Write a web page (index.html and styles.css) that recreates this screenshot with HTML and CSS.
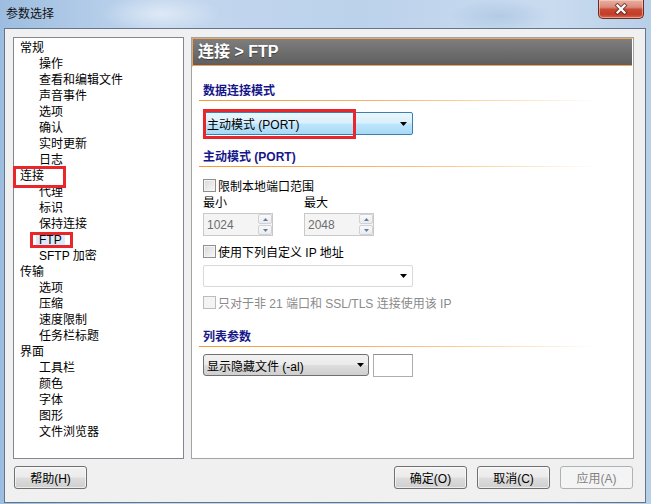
FILE: index.html
```html
<!DOCTYPE html>
<html>
<head>
<meta charset="utf-8">
<title>参数选择</title>
<link rel="stylesheet" href="styles.css">
</head>
<body>
<div class="window">
  <div class="titlebar">
    <span class="title">参数选择</span>
    <div class="close">
      <svg width="14" height="12" viewBox="0 0 14 12">
        <path d="M3.5 2.5 L10.5 9.5 M10.5 2.5 L3.5 9.5" stroke="#4a2a2a" stroke-width="4.2" stroke-linecap="square" fill="none" opacity="0.7"/>
        <path d="M3.5 2.5 L10.5 9.5 M10.5 2.5 L3.5 9.5" stroke="#ffffff" stroke-width="2.2" stroke-linecap="square" fill="none"/>
      </svg>
    </div>
  </div>
  <div class="client">
    <div class="panels">
      <div class="tree">
        <div class="node">常规</div>
        <div class="node child">操作</div>
        <div class="node child">查看和编辑文件</div>
        <div class="node child">声音事件</div>
        <div class="node child">选项</div>
        <div class="node child">确认</div>
        <div class="node child">实时更新</div>
        <div class="node child">日志</div>
        <div class="node">连接<span class="mark mark-conn"></span></div>
        <div class="node child">代理</div>
        <div class="node child">标识</div>
        <div class="node child">保持连接</div>
        <div class="node child"><span class="sel">FTP</span><span class="mark mark-ftp"></span></div>
        <div class="node child">SFTP 加密</div>
        <div class="node">传输</div>
        <div class="node child">选项</div>
        <div class="node child">压缩</div>
        <div class="node child">速度限制</div>
        <div class="node child">任务栏标题</div>
        <div class="node">界面</div>
        <div class="node child">工具栏</div>
        <div class="node child">颜色</div>
        <div class="node child">字体</div>
        <div class="node child">图形</div>
        <div class="node child">文件浏览器</div>
      </div>
      <div class="page">
        <div class="page-header">连接 &gt; FTP</div>
        <div class="page-body">
          <div class="section s1">数据连接模式</div>
          <div class="combo combo-hot">
            <span class="combo-text">主动模式 (PORT)</span>
            <svg class="arrow" width="7" height="4" viewBox="0 0 7 4"><path d="M0 0H7L3.5 4Z" fill="#000"/></svg>
            <span class="mark mark-combo"></span>
          </div>
          <div class="section s2">主动模式 (PORT)</div>
          <div class="check-row r1"><span class="cb"></span>限制本地端口范围</div>
          <div class="grid2 labels"><span>最小</span><span>最大</span></div>
          <div class="grid2 spins">
            <div class="spin">
              <span class="spin-text">1024</span>
              <span class="spin-btns">
                <span class="sb"><svg width="5" height="3" viewBox="0 0 5 3"><path d="M0 3H5L2.5 0Z" fill="#5f7ea3"/></svg></span>
                <span class="sb"><svg width="5" height="3" viewBox="0 0 5 3"><path d="M0 0H5L2.5 3Z" fill="#5f7ea3"/></svg></span>
              </span>
            </div>
            <div class="spin">
              <span class="spin-text">2048</span>
              <span class="spin-btns">
                <span class="sb"><svg width="5" height="3" viewBox="0 0 5 3"><path d="M0 3H5L2.5 0Z" fill="#5f7ea3"/></svg></span>
                <span class="sb"><svg width="5" height="3" viewBox="0 0 5 3"><path d="M0 0H5L2.5 3Z" fill="#5f7ea3"/></svg></span>
              </span>
            </div>
          </div>
          <div class="check-row r2"><span class="cb"></span>使用下列自定义 IP 地址</div>
          <div class="combo combo-empty">
            <span class="combo-text"></span>
            <svg class="arrow" width="7" height="4" viewBox="0 0 7 4"><path d="M0 0H7L3.5 4Z" fill="#000"/></svg>
          </div>
          <div class="check-row r3 disabled"><span class="cb"></span>只对于非 21 端口和 SSL/TLS 连接使用该 IP</div>
          <div class="section s3">列表参数</div>
          <div class="list-row">
            <div class="combo combo-btn">
              <span class="combo-text">显示隐藏文件 (-al)</span>
              <svg class="arrow" width="7" height="4" viewBox="0 0 7 4"><path d="M0 0H7L3.5 4Z" fill="#000"/></svg>
            </div>
            <div class="textbox"></div>
          </div>
        </div>
      </div>
    </div>
    <div class="buttons">
      <div class="btn">帮助(H)</div>
      <div class="spacer"></div>
      <div class="btn">确定(O)</div>
      <div class="btn">取消(C)</div>
      <div class="btn btn-disabled">应用(A)</div>
    </div>
  </div>
</div>
</body>
</html>
```
FILE: styles.css
```css
* { box-sizing: border-box; }
html, body { margin: 0; padding: 0; }
body {
  width: 651px;
  height: 504px;
  overflow: hidden;
  font-family: "Liberation Sans", "Noto Sans CJK SC", sans-serif;
  font-size: 12px;
  color: #000;
}
.window {
  width: 651px;
  height: 504px;
  display: flex;
  flex-direction: column;
  background:
    radial-gradient(ellipse 60px 18px at 160px 14px, rgba(255,255,255,0.45), rgba(255,255,255,0)),
    radial-gradient(ellipse 50px 16px at 500px 16px, rgba(160,190,220,0.5), rgba(160,190,220,0)),
    linear-gradient(90deg, #9dbde0 0%, #c3d7ee 25%, #bcd2eb 55%, #c9dbef 85%, #b8cfe8 100%);
}
.titlebar {
  height: 28px;
  display: flex;
  justify-content: space-between;
  align-items: flex-start;
  padding-left: 6px;
}
.title {
  line-height: 28px;
  font-size: 12px;
  color: #111;
}
.close {
  width: 46px;
  height: 19px;
  margin-right: 7px;
  border: 1px solid #6b2c24;
  border-top: none;
  border-radius: 0 0 5px 5px;
  background: linear-gradient(#e9b0a2 0%, #dc8a7a 40%, #c84a35 52%, #c33c27 80%, #d66a52 100%);
  box-shadow: inset 0 0 0 1px rgba(255,220,210,0.5);
  display: flex;
  align-items: center;
  justify-content: center;
}
.client {
  margin-left: 4px;
  width: 642px;
  height: 475px;
  border: 1px solid #64748a;
  background: #f0f0f0;
  padding: 8px 11px 0 8px;
}
.panels {
  display: flex;
  gap: 7px;
}
.tree {
  width: 171px;
  height: 422px;
  border: 1px solid #828790;
  background: #fff;
  padding-top: 2px;
}
.node {
  position: relative;
  height: 16px;
  line-height: 16px;
  padding-left: 6px;
  white-space: nowrap;
}
.node.child { padding-left: 25px; }
.sel {
  display: inline-block;
  height: 14px;
  line-height: 14px;
  margin-left: -3px;
  padding: 0 3px;
  background: #dbeafa;
}
.mark {
  position: absolute;
  border: 3px solid #e8262b;
  z-index: 2;
}
.mark-conn { left: -1px; top: -2px; width: 53px; height: 22px; }
.mark-ftp { left: 16px; top: 0; width: 43px; height: 16px; }
.mark-combo { left: -1px; top: -4px; width: 153px; height: 30px; }

.page {
  width: 443px;
  height: 422px;
  border: 1px solid #a3a3a3;
  background: #fff;
}
.page-header {
  height: 29px;
  border-top: 1px solid #f2a558;
  border-left: 1px solid #f2a558;
  border-right: 1px solid #fff;
  border-bottom: 1px solid #fff;
  box-shadow: inset 0 -1px 0 #f2a558;
  background: linear-gradient(#7e7e7e, #5d5d5d);
  color: #fff;
  font-weight: bold;
  font-size: 16px;
  line-height: 26px;
  padding-left: 5px;
  text-shadow: 0 1px 1px rgba(0,0,0,0.4);
}
.page-body {
  padding-left: 11px;
}
.section {
  height: 18px;
  line-height: 16px;
  margin-left: -4px;
  padding-left: 4px;
  font-weight: bold;
  color: #17178a;
  background: linear-gradient(90deg, #f49a34 0%, #f7b26a 40%, #fcd9b0 68%, rgba(255,255,255,0) 92%) left bottom / 100% 1px no-repeat;
}
.s1 { margin-top: 16px; }
.s2 { margin-top: 14px; }
.s3 { margin-top: 19px; }

.combo {
  position: relative;
  display: flex;
  align-items: center;
  width: 210px;
  height: 23px;
  padding-left: 3px;
  white-space: nowrap;
}
.combo-text { flex: 1; }
.combo .arrow { margin-right: 5px; }
.combo-hot {
  margin-top: 11px;
  border: 1px solid #3c7fb1;
  border-radius: 2px;
  background: linear-gradient(#eaf6fd 0%, #d9f0fc 48%, #bee6fd 52%, #a7d9f5 100%);
}
.combo-empty {
  margin-top: 6px;
  height: 22px;
  border: 1px solid #d9d9d9;
  border-radius: 2px;
  background: #fff;
}
.combo-btn {
  width: 166px;
  height: 22px;
  border: 1px solid #707070;
  border-radius: 3px;
  background: linear-gradient(#f2f2f2 0%, #ebebeb 48%, #dddddd 52%, #cfcfcf 100%);
}
.combo-btn .arrow { margin-right: 4px; }

.check-row {
  display: flex;
  align-items: center;
  height: 16px;
  white-space: nowrap;
}
.r1 { margin-top: 10px; }
.r2 { margin-top: 7px; }
.r3 { margin-top: 7px; }
.cb {
  width: 13px;
  height: 13px;
  margin-right: 2px;
  border: 1px solid #8e8f8f;
  background: linear-gradient(135deg, #d8d8d8, #f9f9f9);
  box-shadow: inset 0 0 0 1px #f3f3f3;
}
.disabled { color: #8a8a8a; }
.disabled .cb {
  border-color: #bcbcbc;
  background: #f4f4f4;
  box-shadow: none;
}
.grid2 {
  display: grid;
  grid-template-columns: 101px 101px;
}
.labels {
  margin-top: 2px;
  height: 16px;
  line-height: 16px;
}
.spins { margin-top: 2px; }
.spin {
  width: 70px;
  height: 23px;
  border: 1px solid #c9c9c9;
  background: #f4f4f4;
  display: flex;
  align-items: center;
  padding-left: 3px;
  color: #6d6d6d;
}
.spin-text { flex: 1; }
.spin-btns {
  width: 14px;
  height: 21px;
  display: flex;
  flex-direction: column;
  gap: 1px;
}
.sb {
  flex: 1;
  display: flex;
  align-items: center;
  justify-content: center;
  border: 1px solid #cfd3d8;
  border-radius: 2px;
  background: linear-gradient(#fafafa, #ebebeb);
}
.list-row {
  margin-top: 7px;
  display: flex;
  gap: 4px;
}
.textbox {
  width: 40px;
  height: 23px;
  border: 1px solid #abadb3;
  border-top-color: #8e9097;
  background: #fff;
}

.buttons {
  display: flex;
  gap: 10px;
  margin-top: 7px;
  padding: 0 1px;
}
.spacer { flex: 1; }
.btn {
  width: 73px;
  height: 23px;
  border: 1px solid #707070;
  border-radius: 3px;
  background: linear-gradient(#f2f2f2 0%, #ebebeb 48%, #dddddd 52%, #cfcfcf 100%);
  box-shadow: inset 0 0 0 1px rgba(255,255,255,0.6);
  display: flex;
  align-items: center;
  justify-content: center;
  white-space: nowrap;
}
.btn-disabled {
  border-color: #adb2b5;
  background: #f4f4f4;
  box-shadow: none;
  color: #838383;
}
```
